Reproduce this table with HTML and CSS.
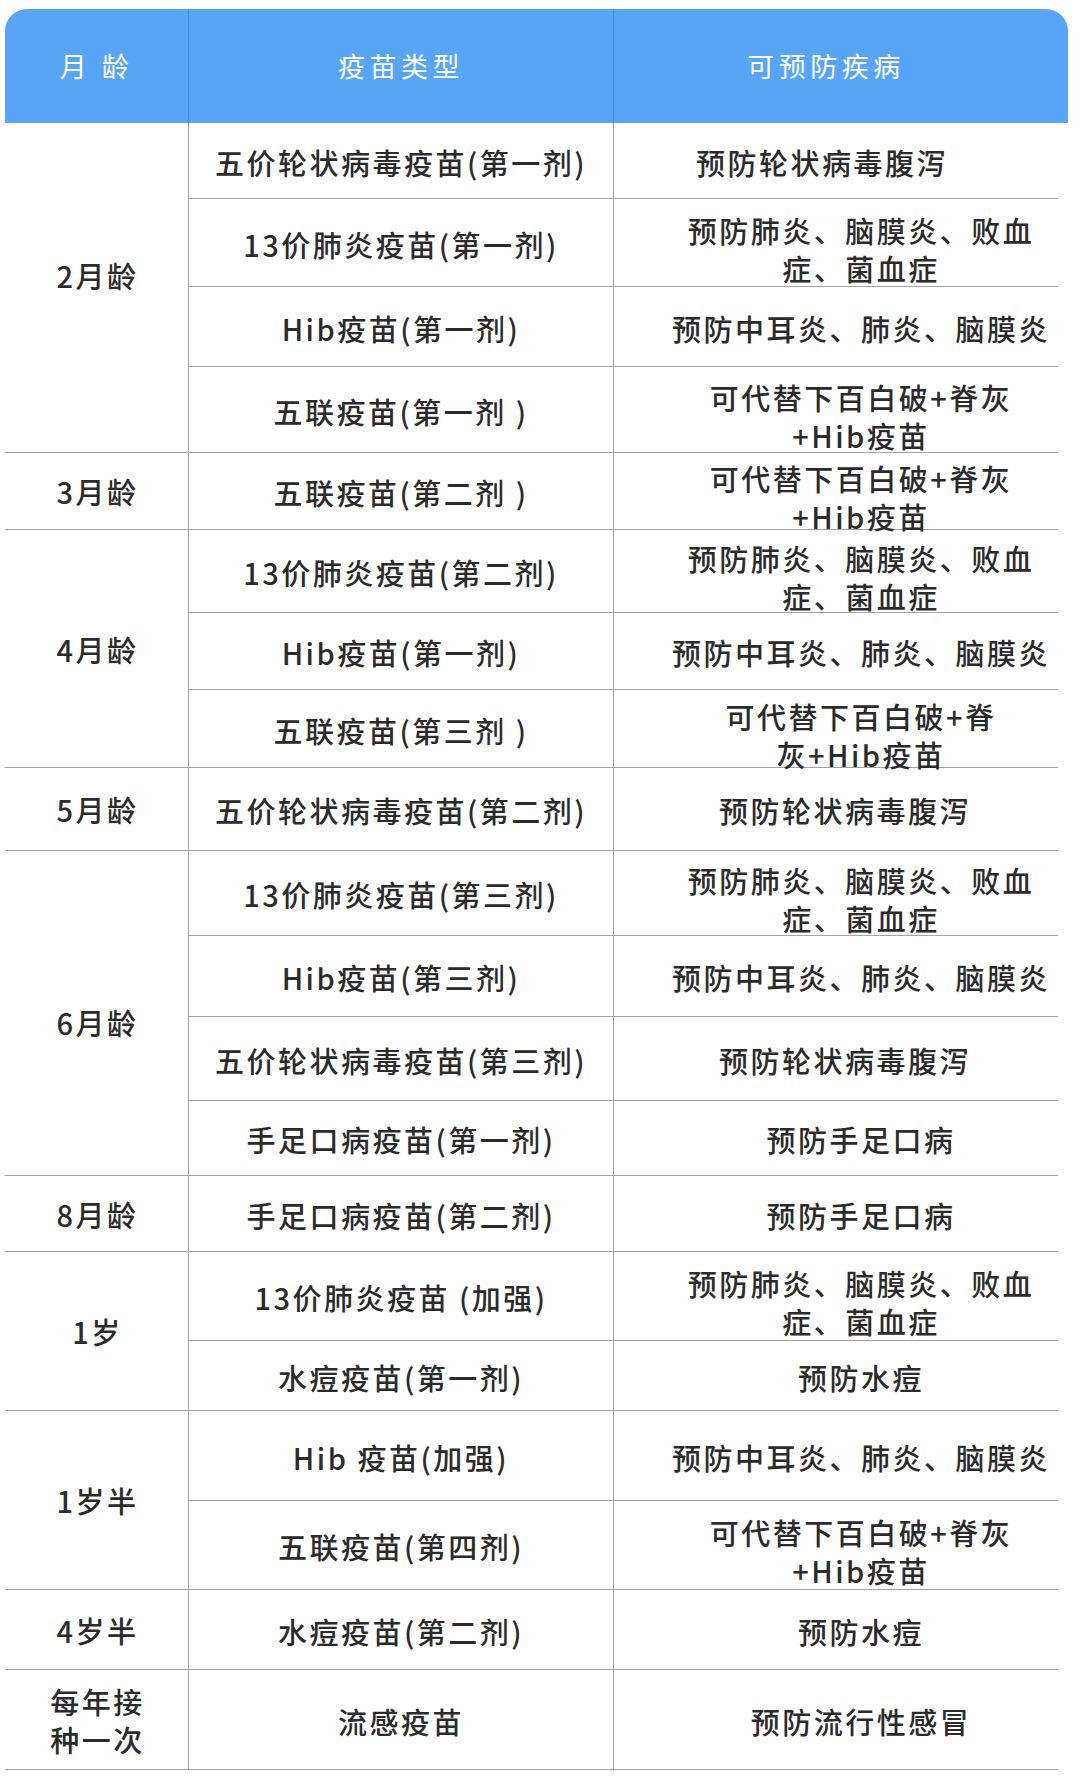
FILE: index.html
```html
<!DOCTYPE html>
<html lang="zh-CN">
<head>
<meta charset="utf-8">
<title>疫苗接种表</title>
<link rel="stylesheet" href="styles.css">
</head>
<body>
<div class="page">
  <div class="head">
    <div class="hcell c1">月 龄</div>
    <div class="hcell c2">疫苗类型</div>
    <div class="hcell c3">可预防疾病</div>
  </div>
  <div class="body">
    <div class="age r4 up">2月龄</div>
    <div class="vac">五价轮状病毒疫苗(第一剂)</div>
    <div class="dis left">预防轮状病毒腹泻</div>
    <div class="vac">13价肺炎疫苗(第一剂)</div>
    <div class="dis two">预防肺炎、脑膜炎、败血<br>症、菌血症</div>
    <div class="vac">Hib疫苗(第一剂)</div>
    <div class="dis">预防中耳炎、肺炎、脑膜炎</div>
    <div class="vac">五联疫苗(第一剂 )</div>
    <div class="dis two">可代替下百白破+脊灰<br>+Hib疫苗</div>

    <div class="age">3月龄</div>
    <div class="vac">五联疫苗(第二剂 )</div>
    <div class="dis two">可代替下百白破+脊灰<br>+Hib疫苗</div>

    <div class="age r3">4月龄</div>
    <div class="vac">13价肺炎疫苗(第二剂)</div>
    <div class="dis two">预防肺炎、脑膜炎、败血<br>症、菌血症</div>
    <div class="vac">Hib疫苗(第一剂)</div>
    <div class="dis">预防中耳炎、肺炎、脑膜炎</div>
    <div class="vac">五联疫苗(第三剂 )</div>
    <div class="dis two">可代替下百白破+脊<br>灰+Hib疫苗</div>

    <div class="age">5月龄</div>
    <div class="vac">五价轮状病毒疫苗(第二剂)</div>
    <div class="dis mid">预防轮状病毒腹泻</div>

    <div class="age r4 down">6月龄</div>
    <div class="vac">13价肺炎疫苗(第三剂)</div>
    <div class="dis two">预防肺炎、脑膜炎、败血<br>症、菌血症</div>
    <div class="vac">Hib疫苗(第三剂)</div>
    <div class="dis">预防中耳炎、肺炎、脑膜炎</div>
    <div class="vac">五价轮状病毒疫苗(第三剂)</div>
    <div class="dis mid">预防轮状病毒腹泻</div>
    <div class="vac">手足口病疫苗(第一剂)</div>
    <div class="dis">预防手足口病</div>

    <div class="age">8月龄</div>
    <div class="vac">手足口病疫苗(第二剂)</div>
    <div class="dis">预防手足口病</div>

    <div class="age r2">1岁</div>
    <div class="vac">13价肺炎疫苗 (加强)</div>
    <div class="dis two">预防肺炎、脑膜炎、败血<br>症、菌血症</div>
    <div class="vac">水痘疫苗(第一剂)</div>
    <div class="dis">预防水痘</div>

    <div class="age r2">1岁半</div>
    <div class="vac">Hib 疫苗(加强)</div>
    <div class="dis">预防中耳炎、肺炎、脑膜炎</div>
    <div class="vac">五联疫苗(第四剂)</div>
    <div class="dis two">可代替下百白破+脊灰<br>+Hib疫苗</div>

    <div class="age">4岁半</div>
    <div class="vac">水痘疫苗(第二剂)</div>
    <div class="dis">预防水痘</div>

    <div class="age">每年接<br>种一次</div>
    <div class="vac">流感疫苗</div>
    <div class="dis">预防流行性感冒</div>
  </div>
</div>
</body>
</html>
```

FILE: styles.css
```css
* {
  box-sizing: border-box;
}

html, body {
  margin: 0;
  padding: 0;
  background: #ffffff;
}

.page {
  padding: 9px 0 0 5px;
  font-family: "Noto Sans CJK SC", "Noto Sans", sans-serif;
}

.head {
  display: grid;
  width: 1063px;
  grid-template-columns: 183px 425px 455px;
  height: 114px;
  background: #58a5f8;
  border-radius: 22px 22px 0 0;
  color: #ffffff;
  font-size: 27px;
  font-weight: 400;
  letter-spacing: 4.5px;
}

.hcell {
  display: flex;
  align-items: center;
  justify-content: center;
  padding-bottom: 2px;
}

.hcell.c2,
.hcell.c3 {
  border-left: 1px solid rgba(40, 90, 150, 0.35);
}

.hcell.c3 {
  padding-right: 30px;
}

.body {
  display: grid;
  width: 1053px;
  grid-template-columns: 183px 425px 445px;
  grid-template-rows: 76px 88px 80px 86px 77px 83px 77px 78px 83px 85px 81px 84px 75px 76px 89px 70px 90px 89px 80px 100px;
  color: #2b2b2b;
  font-size: 29px;
  font-weight: 500;
  letter-spacing: 2.5px;
  line-height: 38px;
}

.age,
.vac,
.dis {
  display: flex;
  align-items: center;
  justify-content: center;
  text-align: center;
  white-space: nowrap;
  border-bottom: 1px solid #a3a3a3;
}

.age {
  grid-column: 1;
  padding-left: 2px;
}

.age.r2 { grid-row: span 2; }
.age.r3 { grid-row: span 3; }
.age.r4 { grid-row: span 4; }
.age.up { padding-bottom: 26px; }
.age.down { padding-top: 18px; }

.vac {
  grid-column: 2;
  border-left: 1px solid #a3a3a3;
  padding-top: 2px;
}

.dis {
  grid-column: 3;
  border-left: 1px solid #a3a3a3;
  padding-left: 50px;
  padding-top: 2px;
}

.dis.left {
  padding-left: 0;
  padding-right: 28px;
}

.dis.mid {
  padding-left: 18px;
}

.dis.two {
  padding-top: 12px;
}
```
